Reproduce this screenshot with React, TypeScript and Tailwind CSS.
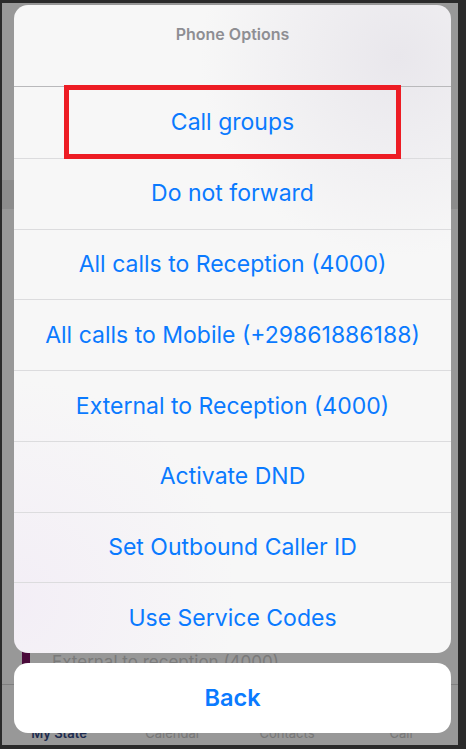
import React from 'react';

const options = [
  'Call groups',
  'Do not forward',
  'All calls to Reception (4000)',
  'All calls to Mobile (+29861886188)',
  'External to Reception (4000)',
  'Activate DND',
  'Set Outbound Caller ID',
  'Use Service Codes',
];

const tabs = ['My State', 'Calendar', 'Contacts', 'Call'];

export default function App() {
  return (
    <div
      className="relative w-[466px] h-[749px] bg-[#2a2a2a] pt-[3px] pl-[2px] pr-[8px] pb-[4px] overflow-hidden"
      style={{ fontFamily: 'Inter, "Noto Sans", sans-serif' }}
    >
      {/* dimmed app underneath */}
      <div className="relative w-full h-full bg-[#989898] overflow-hidden flex flex-col">
        <div className="h-[177px]" />
        <div className="h-[29px] bg-[#8c8c8c]" />
        <div className="flex-1" />
        <div className="flex items-center h-[30px] pl-[20px]">
          <div className="w-[8px] h-full bg-[#4a0a3a]" />
          <span className="ml-[22px] text-[17px] text-[#7a7a7a]">External to reception (4000)</span>
        </div>
        <div className="h-[6px]" />
        <div className="border-t border-[#7f7f7f] h-[61px] flex items-end pb-[2px]">
          {tabs.map((t, i) => (
            <div
              key={t}
              className={`flex-1 text-center text-[13px] ${i === 0 ? 'font-semibold text-[#1c2b4f]' : 'text-[#777777]'}`}
            >
              {t}
            </div>
          ))}
        </div>

        {/* action sheet */}
        <div className="absolute left-[12px] top-[2px] w-[437px] flex flex-col gap-[10px]">
          <div className="rounded-[14px] overflow-hidden bg-[#f7f7f7] bg-[radial-gradient(circle_at_88%_8%,#e9e7ec_0%,transparent_28%),radial-gradient(circle_at_0%_92%,#f3eef6_0%,transparent_30%)]">
            <div className="h-[82px] flex items-start justify-center pt-[17px] border-b border-[#b9b9bb]">
              <span className="text-[16px] font-semibold text-[#8e8e93]">Phone Options</span>
            </div>
            {options.map((o, i) => (
              <div
                key={o}
                className={`h-[70.75px] flex items-center justify-center text-[23px] text-[#0a7aff] ${i > 0 ? 'border-t border-[#dcdcde]' : ''}`}
              >
                {o}
              </div>
            ))}
          </div>
          <div className="h-[70px] rounded-[14px] bg-white flex items-center justify-center text-[23.5px] font-semibold text-[#0a7aff]">
            Back
          </div>
        </div>
      </div>

      {/* highlight box */}
      <div className="absolute left-[64px] top-[85px] w-[337px] h-[74px] border-[5px] border-[#ed1c24]" />
    </div>
  );
}
